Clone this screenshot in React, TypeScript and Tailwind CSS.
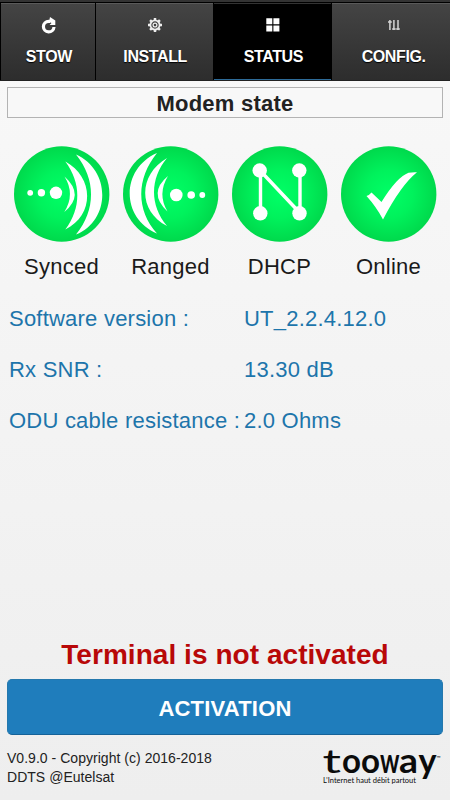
import React from 'react';

const font = "font-['Liberation_Sans',Arial,sans-serif]";

function StowIcon() {
  return (
    <svg width="16" height="18" viewBox="0 0 16 18" className="block">
      <path d="M13 11A5.300 5.300 0 1 1 7.700 5.300H9" fill="none" stroke="#fff" strokeWidth="3.200" />
      <path d="M9 1L14.300 4.500V9H8.600L10.500 7L8 6z" fill="#fff" />
    </svg>
  );
}

function GearIcon() {
  return (
    <svg width="16" height="16" viewBox="-8 -8 16 16" className="block" fill="none" stroke="#eee">
      <circle r="4.600" strokeWidth="1.800" />
      <circle r="1.900" strokeWidth="1.300" />
      {[0, 45, 90, 135, 180, 225, 270, 315].map((a) => (
        <path key={a} d="M0-5V-7" strokeWidth="2.500" transform={`rotate(${a})`} />
      ))}
    </svg>
  );
}

function GridIcon() {
  return (
    <svg width="14" height="14" viewBox="0 0 14 14" className="block" fill="#fff">
      <path d="M.3.3h6v6h-6zM7.4.3h6v6h-6zM.3 7.4h6v6h-6zM7.4 7.4h6v6h-6z" />
    </svg>
  );
}

function SlidersIcon() {
  return (
    <svg width="12" height="12" viewBox="0 0 12 12" className="block" fill="none" stroke="#d4d4d4" strokeWidth="1.500">
      <path d="M1.900.9v10M5.900.9v10M10 .9v10" />
      <path d="M0 3h3.800M4.100 10h3.600M8.200 10h3.600" strokeWidth="1.700" />
    </svg>
  );
}

function Tab({ icon, label, className }: { icon: React.ReactNode; label: string; className: string }) {
  return (
    <div className={`flex h-[77px] flex-col items-center border-t ${className}`}>
      <div className="flex h-[42px] items-center justify-center">{icon}</div>
      <div className="flex h-[22px] items-center text-[16px] font-bold tracking-[-0.4px] whitespace-nowrap text-white [text-shadow:0_1px_1px_#000]">{label}</div>
    </div>
  );
}

const raised = 'border-t-[#5a5a5a] bg-linear-to-b from-[#444] to-[#2d2d2d]';

function Badge({ label, children }: { label: string; children: React.ReactNode }) {
  return (
    <div className="flex w-[109px] flex-col items-center">
      <svg width="96" height="96" viewBox="0 0 96 96" className="block" fill="#fff">
        <defs>
          <radialGradient id={`g-${label}`}>
            <stop offset="0" stopColor="#00ff66" />
            <stop offset=".5" stopColor="#00f25c" />
            <stop offset="1" stopColor="#00d94c" />
          </radialGradient>
        </defs>
        <circle cx="47.700" cy="48" r="47.700" fill={`url(#g-${label})`} />
        {children}
      </svg>
      <div className="mt-3 text-[22px] leading-[26px] tracking-[0.25px] text-[#1a1a1a]">{label}</div>
    </div>
  );
}

function Row({ label, value }: { label: string; value: string }) {
  return (
    <div className="flex h-[51px] items-center text-[22px] tracking-[0.22px] whitespace-nowrap text-[#1d75ab]">
      <div className="w-[235px]">{label}</div>
      <div>{value}</div>
    </div>
  );
}

export default function App() {
  return (
    <div className={`flex h-[800px] w-[450px] flex-col overflow-hidden bg-linear-to-b from-[#f9f9f9] to-[#eeeeee] ${font}`}>
      <nav className="flex h-[81px] gap-px border-t-2 border-b border-t-[#333] border-b-[#222] bg-black pt-px pl-px">
        <Tab icon={<StowIcon />} label="STOW" className={`w-[94px] pl-[2px] ${raised}`} />
        <Tab icon={<GearIcon />} label="INSTALL" className={`w-[117px] pl-[2px] ${raised}`} />
        <Tab icon={<GridIcon />} label="STATUS" className="w-[118px] border-b border-t-[#333] border-b-[#2d6b99] bg-black pl-[2px]" />
        <Tab icon={<SlidersIcon />} label="CONFIG." className={`w-[118px] pl-[5px] ${raised}`} />
      </nav>

      <h1 className="mx-[7px] mt-[6px] flex h-[31px] items-center justify-center border border-[#b3b3b3] bg-[#f8f8f8] pt-px text-[22px] font-bold tracking-[0.25px] text-[#222]">
        Modem state
      </h1>

      <section className="mt-[28px] flex pl-[7px]">
        <Badge label="Synced">
          <circle cx="16.200" cy="46.800" r="2.900" />
          <circle cx="27.400" cy="46.800" r="3.700" />
          <circle cx="42" cy="46.800" r="6.200" />
          <path d="M50.500 30.500Q71 49 50.300 66Q61.500 48 50.500 30.500z" />
          <path d="M51.300 15.500C80 31 81 69 51.300 83.500C67.300 62 67.300 37 51.300 15.500z" />
          <path d="M62 8.500C97 24 97 74 62 88.500C82 64 82 33 62 8.500z" />
        </Badge>
        <Badge label="Ranged">
          <circle cx="79.300" cy="49" r="2.900" />
          <circle cx="68.200" cy="49" r="3.800" />
          <circle cx="53.300" cy="49" r="6.300" />
          <path d="M45 30Q24.500 47 44.500 65.500Q34 48 45 30z" />
          <path d="M44 12C15 29 15 65 44 80C26.700 59 26.700 33 44 12z" />
          <path d="M34 7C-2.400 23-2.400 72 34 87.500C13 64 13 33 34 7z" />
        </Badge>
        <Badge label="DHCP">
          <path d="M28.500 24.500V67M68 67L28 24.500M68 24.500V67" fill="none" stroke="#fff" strokeWidth="3.400" />
          <circle cx="27.700" cy="24.500" r="7.200" />
          <circle cx="67.300" cy="24.500" r="7.200" />
          <circle cx="28.300" cy="67.300" r="7.200" />
          <circle cx="67.500" cy="67.300" r="7.200" />
        </Badge>
        <Badge label="Online">
          <path d="M25.500 50Q28.500 49 30.500 46.500L40.500 56Q56 31 67.500 26.800Q72 26 76 26.300Q60 39 42 73.500Q35.500 61 25.500 50z" />
        </Badge>
      </section>

      <section className="mt-[13px] pl-[9px]">
        <Row label="Software version :" value="UT_2.2.4.12.0" />
        <Row label="Rx SNR :" value="13.30 dB" />
        <Row label="ODU cable resistance :" value="2.0 Ohms" />
      </section>

      <div className="mt-auto flex h-[44px] items-center justify-center text-[28px] font-bold tracking-[0.05px] whitespace-nowrap text-[#b80808]">
        Terminal is not activated
      </div>
      <button className="mx-[7px] mt-[2px] flex h-[56px] shrink-0 items-center justify-center rounded-[5px] border border-[#2478ad] border-b-[#156298] bg-[#1f7dbc] pt-[3px] text-[22px] font-bold tracking-[0.2px] text-white">
        ACTIVATION
      </button>

      <footer className="flex h-[65px] shrink-0 justify-between pr-[6px] pl-[7px]">
        <div className="mt-[14px] text-[14px] leading-[19px] tracking-[0.03px] whitespace-nowrap text-[#222]">
          V0.9.0 - Copyright (c) 2016-2018
          <br />
          DDTS @Eutelsat
        </div>
        <svg width="122" height="48" viewBox="0 0 122 48" className="mt-[10px] block overflow-visible" fill="#0b0b0b">
          <text fontSize="33.500" fontWeight="700" className="font-['Lato',sans-serif]">
            <tspan x="0.500" y="28.300" fontWeight="400" textLength="18.500" lengthAdjust="spacingAndGlyphs">t</tspan>
            <tspan x="20" y="28.300" textLength="38" lengthAdjust="spacingAndGlyphs">oo</tspan>
            <tspan x="58" y="28.300" textLength="19.500" lengthAdjust="spacingAndGlyphs">w</tspan>
            <tspan x="77" y="28.300" textLength="19" lengthAdjust="spacingAndGlyphs">a</tspan>
            <tspan x="96.500" y="28.300" textLength="18" lengthAdjust="spacingAndGlyphs">y</tspan>
          </text>
          <text x="114.500" y="15" fontSize="5.500" className="font-['Lato',sans-serif]">™</text>
          <text x="1" y="38" fontSize="7.500" textLength="93" lengthAdjust="spacingAndGlyphs" className="font-['Lato',sans-serif]">L’Internet haut débit partout</text>
        </svg>
      </footer>
    </div>
  );
}
